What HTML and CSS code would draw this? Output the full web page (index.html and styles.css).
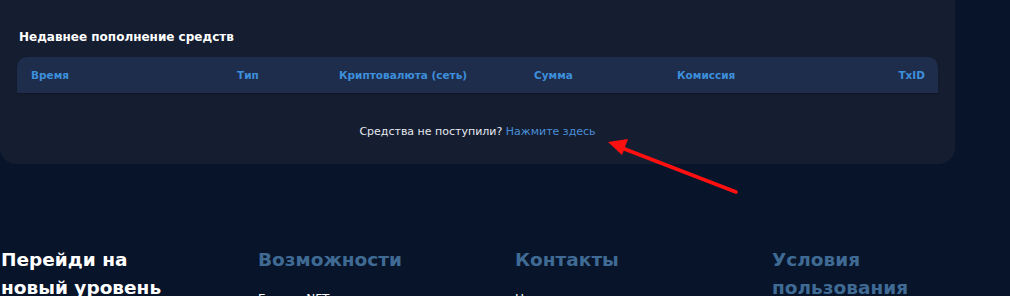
FILE: index.html
```html
<!DOCTYPE html>
<html lang="ru">
<head>
  <meta charset="UTF-8">
  <title>Пополнение средств</title>
  <link rel="stylesheet" href="styles.css">
</head>
<body>
  <section class="card">
    <h2 class="card-title">Недавнее пополнение средств</h2>

    <div class="table-head">
      <span>Время</span>
      <span>Тип</span>
      <span>Криптовалюта (сеть)</span>
      <span>Сумма</span>
      <span>Комиссия</span>
      <span class="right">TxID</span>
    </div>

    <p class="help">Средства не поступили? <a href="#">Нажмите здесь</a></p>
  </section>

  <!-- стрелка-пометка поверх страницы -->
  <svg class="arrow" width="1010" height="296" viewBox="0 0 1010 296">
    <line x1="736" y1="192" x2="622" y2="148" stroke="#ff1010" stroke-width="3.5" stroke-linecap="round"/>
    <polygon points="608,142 628,139 622,155" fill="#ff1010"/>
  </svg>

  <footer class="footer">
    <div class="col">
      <h3 class="slogan">Перейди на новый уровень</h3>
    </div>
    <div class="col">
      <h3>Возможности</h3>
      <ul><li>Гарант NFT</li></ul>
    </div>
    <div class="col">
      <h3>Контакты</h3>
      <ul><li>Написать нам</li></ul>
    </div>
    <div class="col">
      <h3>Условия пользования</h3>
      <ul><li>Правила</li></ul>
    </div>
  </footer>
</body>
</html>
```

FILE: styles.css
```css
body {
  margin: 0;
  background: #07142a;
  font-family: "DejaVu Sans", sans-serif;
  color: #fff;
  height: 296px;
  overflow: hidden;
  position: relative;
}
.card {
  width: 921px;
  margin-top: -20px;
  padding: 50px 17px 26px 17px;
  background: #151d30;
  border-radius: 0 0 16px 16px;
}
.card-title {
  margin: 0 0 13px 2px;
  font-size: 12px;
  font-weight: bold;
  color: #fff;
}
.table-head {
  display: grid;
  grid-template-columns: 206px 102px 195px 143px 1fr auto;
  align-items: center;
  height: 36px;
  padding: 0 13px 0 14px;
  background: #1f2d4c;
  border-radius: 10px 10px 0 0;
  box-shadow: 0 1px 2px rgba(0, 0, 0, 0.25);
  font-size: 10.5px;
  font-weight: bold;
  color: #3d8fdb;
}
.table-head .right {
  text-align: right;
}
.help {
  margin: 32px 0 0 0;
  text-align: center;
  font-size: 11px;
  color: #e6e9ef;
}
.help a {
  color: #4a8fd6;
  text-decoration: none;
}
.arrow {
  position: absolute;
  left: 0;
  top: 0;
  pointer-events: none;
}
.footer {
  display: grid;
  grid-template-columns: repeat(4, 257px);
  margin-top: 82px;
  padding-left: 1px;
}
.footer h3 {
  margin: 0;
  max-width: 170px;
  font-size: 18.5px;
  line-height: 28px;
  font-weight: bold;
  color: #3f6a94;
}
.footer h3.slogan {
  color: #fff;
}
.footer ul {
  list-style: none;
  margin: 18px 0 0 0;
  padding: 0;
  font-size: 12px;
  color: #fff;
}
```
